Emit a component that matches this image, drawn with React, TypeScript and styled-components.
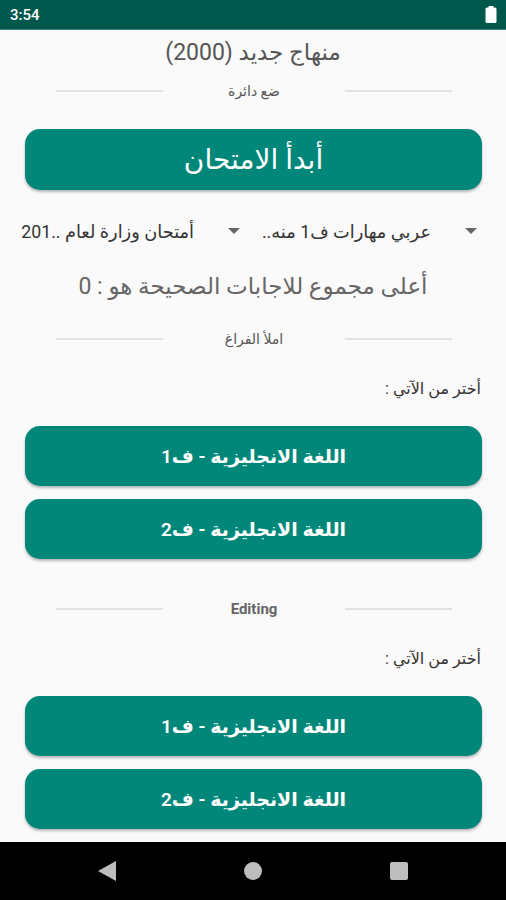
import React from "react";
import styled, { createGlobalStyle } from "styled-components";

const GlobalStyle = createGlobalStyle`
  html, body {
    margin: 0;
    padding: 0;
    background: #fafafa;
  }
  body {
    font-family: Roboto, "Noto Sans", "DejaVu Sans", sans-serif;
  }
`;

const Screen = styled.div`
  width: 506px;
  height: 900px;
  display: flex;
  flex-direction: column;
  overflow: hidden;
  background: #fafafa;
`;

const StatusBar = styled.div`
  height: 29px;
  flex: 0 0 29px;
  background: #00574b;
  border-bottom: 1px solid #3d7f75;
  display: flex;
  align-items: center;
  justify-content: space-between;
  padding: 0 9px 0 10px;
  color: #fff;
  font-family: Roboto, sans-serif;
  font-size: 15px;
  font-weight: 500;
`;

const Content = styled.main`
  flex: 1;
  direction: rtl;
  display: flex;
  flex-direction: column;
  overflow: hidden;
`;

const Title = styled.h1`
  margin: 8px 0 0;
  height: 30px;
  line-height: 30px;
  text-align: center;
  font-size: 23px;
  font-weight: 400;
  color: #555;
`;

const DividerRow = styled.div<{ $top: number }>`
  margin-top: ${(p) => p.$top}px;
  height: 20px;
  display: grid;
  grid-template-columns: 107px 182px 107px;
  align-items: center;
  direction: ltr;
  padding-left: 56px;
`;

const DividerLine = styled.span`
  height: 2px;
  background: #e2e2e2;
`;

const DividerText = styled.span<{ $bold?: boolean }>`
  text-align: center;
  font-size: ${(p) => (p.$bold ? "15px" : "14px")};
  font-weight: ${(p) => (p.$bold ? 700 : 400)};
  color: ${(p) => (p.$bold ? "#666" : "#555")};
`;

const TealButton = styled.button<{ $top: number; $big?: boolean }>`
  margin: ${(p) => p.$top}px 24px 0 25px;
  height: ${(p) => (p.$big ? 61 : 60)}px;
  flex: 0 0 auto;
  border: none;
  border-radius: 15px;
  background: #00877a;
  color: #fff;
  font-family: inherit;
  font-size: ${(p) => (p.$big ? "28px" : "19px")};
  font-weight: ${(p) => (p.$big ? 400 : 600)};
  box-shadow: 0 2px 3px rgba(0, 0, 0, 0.28);
  direction: rtl;
  display: flex;
  align-items: center;
  justify-content: center;
`;

const SpinnerRow = styled.div`
  margin-top: 26px;
  height: 30px;
  display: flex;
  direction: ltr;
  justify-content: flex-end;
  padding-right: 29px;
`;

const Spinner = styled.div`
  width: 237px;
  display: flex;
  align-items: center;
  justify-content: flex-end;
  gap: 34px;
`;

const SpinnerText = styled.span`
  direction: rtl;
  font-size: 17.8px;
  color: #333;
  white-space: nowrap;
`;

const Caret = styled.span`
  width: 0;
  height: 0;
  border-left: 6px solid transparent;
  border-right: 6px solid transparent;
  border-top: 6px solid #666;
`;

const Score = styled.p`
  margin: 27px 0 0;
  height: 28px;
  line-height: 28px;
  text-align: center;
  font-size: 23px;
  color: #666;
`;

const Label = styled.p<{ $top: number }>`
  margin: ${(p) => p.$top}px 25px 0 0;
  height: 20px;
  line-height: 20px;
  font-size: 16px;
  color: #333;
`;

const NavBar = styled.nav`
  height: 58px;
  flex: 0 0 58px;
  background: #000;
  display: grid;
  grid-template-columns: repeat(3, 146px);
  justify-content: center;
  align-items: center;
  justify-items: center;
`;

const NavCircle = styled.span`
  width: 18px;
  height: 18px;
  border-radius: 50%;
  background: #bdbdbd;
`;

const NavSquare = styled.span`
  width: 18px;
  height: 18px;
  border-radius: 2px;
  background: #bdbdbd;
`;

const Battery = () => (
  <svg width="12" height="17" viewBox="0 0 12 17">
    <rect x="3.5" y="0" width="5" height="2" rx="0.5" fill="#fff" />
    <rect x="0.5" y="1.5" width="11" height="15.5" rx="1.5" fill="#fff" />
  </svg>
);

const BackIcon = () => (
  <svg width="18" height="20" viewBox="0 0 18 20">
    <path d="M18 0 L18 20 L0 10 Z" fill="#bdbdbd" />
  </svg>
);

const Divider: React.FC<{ text: string; top: number; bold?: boolean }> = ({
  text,
  top,
  bold,
}) => (
  <DividerRow $top={top}>
    <DividerLine />
    <DividerText $bold={bold}>{text}</DividerText>
    <DividerLine />
  </DividerRow>
);

const App: React.FC = () => {
  return (
    <>
      <GlobalStyle />
      <Screen>
        <StatusBar>
          <span>3:54</span>
          <Battery />
        </StatusBar>
        <Content>
          <Title>منهاج جديد (2000)</Title>
          <Divider text="ضع دائرة" top={13} />
          <TealButton $top={28} $big>
            أبدأ الامتحان
          </TealButton>
          <SpinnerRow>
            <Spinner>
              <SpinnerText>أمتحان وزارة لعام ..201</SpinnerText>
              <Caret />
            </Spinner>
            <Spinner>
              <SpinnerText>عربي مهارات ف1 منه..</SpinnerText>
              <Caret />
            </Spinner>
          </SpinnerRow>
          <Score>أعلى مجموع للاجابات الصحيحة هو : 0</Score>
          <Divider text="املأ الفراغ" top={28} />
          <Label $top={30}>أختر من الآتي :</Label>
          <TealButton $top={27}>اللغة الانجليزية - ف1</TealButton>
          <TealButton $top={13}>اللغة الانجليزية - ف2</TealButton>
          <Divider text="Editing" top={40} bold />
          <Label $top={30}>أختر من الآتي :</Label>
          <TealButton $top={27}>اللغة الانجليزية - ف1</TealButton>
          <TealButton $top={13}>اللغة الانجليزية - ف2</TealButton>
        </Content>
        <NavBar>
          <BackIcon />
          <NavCircle />
          <NavSquare />
        </NavBar>
      </Screen>
    </>
  );
};

export default App;
